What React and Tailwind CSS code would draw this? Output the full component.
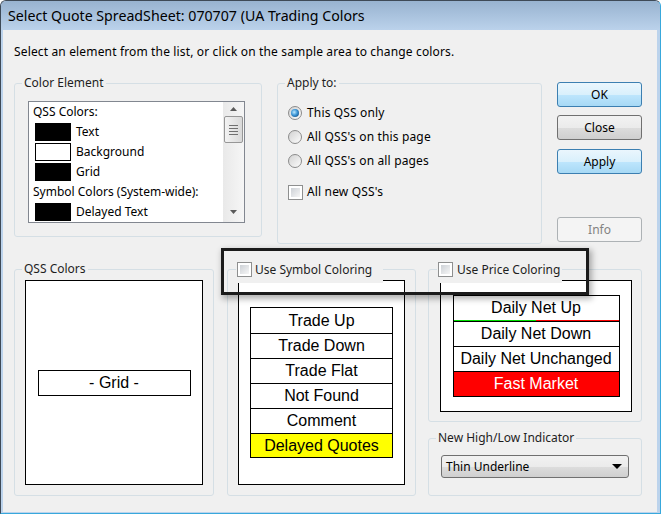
import React from "react";

const ui = "font-['Noto_Sans','Liberation_Sans',sans-serif]";
const arial = "font-['Liberation_Sans',Arial,sans-serif]";

const GroupBox = ({ label, className = "", legendClass = "", children }) => (
  <fieldset className={`rounded-[3px] border border-[#d5dfe5] ${className}`}>
    <legend className={`ml-[7px] px-[2px] text-[12px] leading-[16px] text-[#1e1e1e] ${legendClass}`}>
      {label}
    </legend>
    {children}
  </fieldset>
);

const Radio = ({ checked }) => (
  <span className="flex h-[14px] w-[14px] shrink-0 items-center justify-center rounded-full border border-[#8b8b8b] bg-linear-to-br from-[#d2d2d2] to-[#fcfcfc]">
    {checked && (
      <span className="h-[8px] w-[8px] rounded-full bg-[radial-gradient(circle_at_40%_40%,#bfeaff_0%,#3b95d6_45%,#0d3868_100%)]" />
    )}
  </span>
);

const Check = () => (
  <span className="block h-[15px] w-[15px] shrink-0 border border-[#8e8f8f] bg-white p-[2px]">
    <span className="block h-full w-full bg-linear-to-br from-[#cdd1d6] to-[#f6f6f6]" />
  </span>
);

const Btn = ({ children, kind = "normal", className = "" }) => {
  const look = {
    blue: "border-[#3c7fb1] bg-[linear-gradient(#eaf6fd,#d9f0fc_50%,#bee6fd_50%,#a7d9f5)] text-black",
    normal: "border-[#707070] bg-[linear-gradient(#f2f2f2,#ebebeb_50%,#dddddd_50%,#cfcfcf)] text-black",
    disabled: "border-[#adb2b5] bg-[#f4f4f4] text-[#838383]",
  }[kind];
  return (
    <div className={`flex h-[25px] w-[85px] items-center justify-center rounded-[3px] border text-[12px] ${look} ${className}`}>
      {children}
    </div>
  );
};

const Swatch = ({ white }) => (
  <span className={`block h-[18px] w-[36px] shrink-0 border border-black ${white ? "bg-white" : "bg-black"}`} />
);

const ListRow = ({ swatch, white, children }) => (
  <div className={`flex h-[20px] items-center ${swatch ? "pl-[6px]" : "pl-[4px]"}`}>
    {swatch && <Swatch white={white} />}
    <span className={swatch ? "ml-[5px]" : ""}>{children}</span>
  </div>
);

const ScrollBar = () => (
  <div className="flex w-[21px] flex-col items-center bg-linear-to-r from-[#e9e9e9] to-[#f6f6f6]">
    <div className="flex h-[14px] items-center justify-center">
      <svg width="7" height="4" viewBox="0 0 7 4"><path d="M3.5 0 L7 4 L0 4 Z" fill="#5a5a5a" /></svg>
    </div>
    <div className="flex h-[27px] w-[19px] flex-col items-center justify-center gap-[2px] rounded-[2px] border border-[#979797] bg-linear-to-r from-[#f3f3f3] to-[#d9d9d9]">
      <span className="block h-px w-[9px] bg-[#707070]" />
      <span className="block h-px w-[9px] bg-[#707070]" />
      <span className="block h-px w-[9px] bg-[#707070]" />
      <span className="block h-px w-[9px] bg-[#707070]" />
    </div>
    <div className="flex-1" />
    <div className="flex h-[20px] items-center justify-center">
      <svg width="7" height="4" viewBox="0 0 7 4"><path d="M0 0 L7 0 L3.5 4 Z" fill="#5a5a5a" /></svg>
    </div>
  </div>
);

const symbolRows = ["Trade Up", "Trade Down", "Trade Flat", "Not Found", "Comment", "Delayed Quotes"];

const priceRows = [
  { label: "Daily Net Up", line: true },
  { label: "Daily Net Down", line: true },
  { label: "Daily Net Unchanged", line: true },
  { label: "Fast Market", fast: true },
];

export default function App() {
  return (
    <div className={`relative flex h-[514px] w-[661px] flex-col overflow-hidden rounded-t-[6px] border border-[#3e4a57] border-b-[#38a8dc] border-r-[#38a8dc] bg-[#bcd3ec] ${ui}`}>
      {/* title bar */}
      <div className="flex h-[29px] shrink-0 items-center bg-linear-to-b from-[#98b3d0] to-[#bbd2eb] pl-[7px] text-[14.2px] text-black">
        Select Quote SpreadSheet: 070707 (UA Trading Colors
      </div>

      <div className="ml-[2px] mr-[3px] mb-[1px] flex flex-1 flex-col bg-[#f0f0f0] text-[12px] text-black">
        <div className="pl-[11px] pt-[14px] leading-[16px] tracking-[0.15px]">
          Select an element from the list, or click on the sample area to change colors.
        </div>

        {/* upper row */}
        <div className="mt-[15px] flex items-start pl-[11px]">
          <GroupBox label="Color Element" className="h-[162px] w-[248px]">
            <div className="ml-[13px] mt-[10px] flex h-[122px] w-[217px] border border-[#828790] bg-white">
              <div className="flex-1 leading-[16px]">
                <ListRow>QSS Colors:</ListRow>
                <ListRow swatch>Text</ListRow>
                <ListRow swatch white>Background</ListRow>
                <ListRow swatch>Grid</ListRow>
                <ListRow>Symbol Colors (System-wide):</ListRow>
                <ListRow swatch>Delayed Text</ListRow>
              </div>
              <ScrollBar />
            </div>
          </GroupBox>

          <GroupBox label="Apply to:" className="ml-[15px] h-[169px] w-[265px]">
            <div className="flex flex-col pl-[10px] pt-[10px] tracking-[0.15px]">
              <label className="flex h-[24px] items-center gap-[5px]"><Radio checked />This QSS only</label>
              <label className="flex h-[24px] items-center gap-[5px]"><Radio />All QSS's on this page</label>
              <label className="flex h-[24px] items-center gap-[5px]"><Radio />All QSS's on all pages</label>
              <label className="mt-[7px] flex h-[24px] items-center gap-[4px]"><Check />All new QSS's</label>
            </div>
          </GroupBox>

          <div className="ml-[15px] mt-[7px] flex flex-col">
            <Btn kind="blue">OK</Btn>
            <Btn className="mt-[8px]">Close</Btn>
            <Btn kind="blue" className="mt-[9px]">Apply</Btn>
            <Btn kind="disabled" className="mt-[43px]">Info</Btn>
          </div>
        </div>

        {/* lower row */}
        <div className="mt-[17px] flex items-start pl-[11px]">
          <GroupBox label="QSS Colors" className="h-[235px] w-[200px]">
            <div className="ml-[10px] mt-[3px] flex h-[205px] w-[178px] items-center justify-center border border-black bg-white">
              <div className={`flex h-[26px] w-[153px] items-center justify-center border border-black text-[16px] ${arial}`}>
                - Grid -
              </div>
            </div>
          </GroupBox>

          <GroupBox
            className="ml-[13px] h-[235px] w-[189px]"
            legendClass="!ml-[8px] !px-[1px] w-[147px] bg-[#f0f0f0]"
            label={
              <span className="flex h-[17px] items-center gap-[3px]"><Check />Use Symbol Coloring</span>
            }
          >
            <div className="relative ml-[10px] mt-[2px] flex h-[205px] w-[167px] items-center justify-center border border-black bg-white">
              <span className="absolute -left-px -top-px h-[3px] w-[145px] bg-[#f0f0f0]" />
              <div className={`flex w-[143px] flex-col border border-black text-[16px] ${arial}`}>
                {symbolRows.map((r, i) => (
                  <div
                    key={r}
                    className={`flex items-center justify-center ${i > 0 ? "border-t border-black" : ""} ${i === 5 ? "h-[24px] bg-[#ffff00]" : "h-[25px]"}`}
                  >
                    {r}
                  </div>
                ))}
              </div>
            </div>
          </GroupBox>

          <div className="ml-[12px] flex w-[214px] flex-col">
            <GroupBox
              className="h-[161px] w-[214px]"
              legendClass="!ml-[8px] !px-[1px] w-[125px] bg-[#f0f0f0]"
              label={
                <span className="flex h-[17px] items-center gap-[4px]"><Check />Use Price Coloring</span>
              }
            >
              <div className="relative ml-[11px] mt-[2px] flex h-[132px] w-[192px] items-center justify-center border border-black bg-white">
                <span className="absolute -left-px -top-px h-[3px] w-[122px] bg-[#f0f0f0]" />
                <div className={`flex w-[167px] flex-col border border-black text-[16px] ${arial}`}>
                  {priceRows.map((r, i) => (
                    <div
                      key={r.label}
                      className={`flex h-[25px] flex-col ${i > 0 ? "border-t border-black" : ""} ${r.fast ? "bg-[#ff0000] text-white" : ""}`}
                    >
                      <div className="flex flex-1 items-center justify-center">{r.label}</div>
                      {r.line && (
                        <div className="flex h-px">
                          <span className="flex-1 bg-[#00e000]" />
                          <span className="flex-1 bg-[#ff0000]" />
                        </div>
                      )}
                    </div>
                  ))}
                </div>
              </div>
            </GroupBox>

            <GroupBox label="New High/Low Indicator" className="mt-[8px] h-[66px] w-[214px]">
              <div className="ml-[12px] mt-[9px] flex h-[23px] w-[188px] items-center justify-between rounded-[3px] border border-[#707070] bg-[linear-gradient(#f2f2f2,#ebebeb_50%,#dddddd_50%,#cfcfcf)] pl-[4px] pr-[6px]">
                <span>Thin Underline</span>
                <svg width="10" height="5" viewBox="0 0 10 5"><path d="M0 0 L10 0 L5 5 Z" fill="#000" /></svg>
              </div>
            </GroupBox>
          </div>
        </div>
      </div>

      {/* highlight frame drawn over the two checkbox captions */}
      <div className="pointer-events-none absolute left-[220px] top-[247px] h-[47px] w-[368px] border-[3px] border-[#1b1b1b] shadow-[2px_3px_6px_1px_rgba(0,0,0,0.3)]" />
    </div>
  );
}
